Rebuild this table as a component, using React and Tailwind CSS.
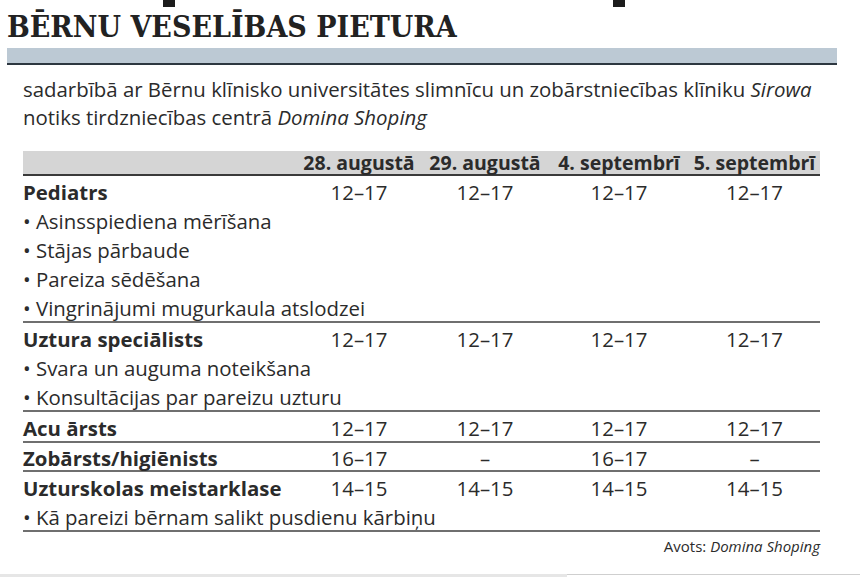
const groups = [
  {
    name: "Pediatrs",
    vals: ["12–17", "12–17", "12–17", "12–17"],
    items: [
      "Asinsspiediena mērīšana",
      "Stājas pārbaude",
      "Pareiza sēdēšana",
      "Vingrinājumi mugurkaula atslodzei",
    ],
  },
  {
    name: "Uztura speciālists",
    vals: ["12–17", "12–17", "12–17", "12–17"],
    items: ["Svara un auguma noteikšana", "Konsultācijas par pareizu uzturu"],
  },
  { name: "Acu ārsts", vals: ["12–17", "12–17", "12–17", "12–17"], items: [] },
  { name: "Zobārsts/higiēnists", vals: ["16–17", "–", "16–17", "–"], items: [], tight: true },
  {
    name: "Uzturskolas meistarklase",
    vals: ["14–15", "14–15", "14–15", "14–15"],
    items: ["Kā pareizi bērnam salikt pusdienu kārbiņu"],
  },
];

const days = ["28. augustā", "29. augustā", "4. septembrī", "5. septembrī"];

const cols = "grid grid-cols-[274px_124px_128px_140px_131px]";

const Group = ({ g }) => (
  <div className="border-b-2 border-[#6f6f6f]">
    <div className={`${cols} pt-[4px] ${g.tight ? "leading-[23px]" : "leading-[25px]"}`}>
      <div className="font-bold">{g.name}</div>
      {g.vals.map((v, i) => (
        <div key={i} className="text-center">
          {v}
        </div>
      ))}
    </div>
    {g.items.map((it) => (
      <div key={it} className="pt-[4px] leading-[25px]">
        • {it}
      </div>
    ))}
  </div>
);

export default function App() {
  return (
    <div className="w-[860px] h-[577px] overflow-hidden bg-white flex flex-col text-[#2b2b2b] font-['Open_Sans',sans-serif]">
      <div className="flex h-[7px] shrink-0">
        <div className="ml-[163px] w-[12px] bg-[#1c1c1c]" />
        <div className="ml-[438px] w-[12px] bg-[#1c1c1c]" />
      </div>

      <h1 className="ml-[7px] mt-[1px] font-['DejaVu_Serif_Condensed','DejaVu_Serif',serif] font-bold text-[30px] leading-[38px] text-[#222]">
        BĒRNU VESELĪBAS PIETURA
      </h1>

      <div className="ml-[7px] mt-[2px] w-[830px] h-[17px] bg-[#bcc9d4] border-b-2 border-[#2d3740]" />

      <p className="ml-[23px] mt-[10px] w-[810px] text-[20.4px] leading-[28px]">
        sadarbībā ar Bērnu klīnisko universitātes slimnīcu un zobārstniecības klīniku <i>Sirowa</i>
        <br />
        notiks tirdzniecības centrā <i>Domina Shoping</i>
      </p>

      <div className="ml-[23px] mt-[20px] w-[797px] text-[20.4px]">
        <div className={`${cols} h-[25px] bg-[#d5d5d5] border-b-2 border-[#3a3a3a] font-bold text-[19.5px] leading-[23px]`}>
          <div />
          {days.map((d) => (
            <div key={d} className="text-center">
              {d}
            </div>
          ))}
        </div>
        {groups.map((g) => (
          <Group key={g.name} g={g} />
        ))}
        <div className="mt-[4px] text-right text-[15px] leading-[20px]">
          Avots: <i>Domina Shoping</i>
        </div>
      </div>

      <div className="mt-auto flex h-[3px] shrink-0">
        <div className="w-[567px] bg-[#e6e6e6]" />
        <div className="flex-1 border-t border-[#cfcfcf]" />
      </div>
    </div>
  );
}
